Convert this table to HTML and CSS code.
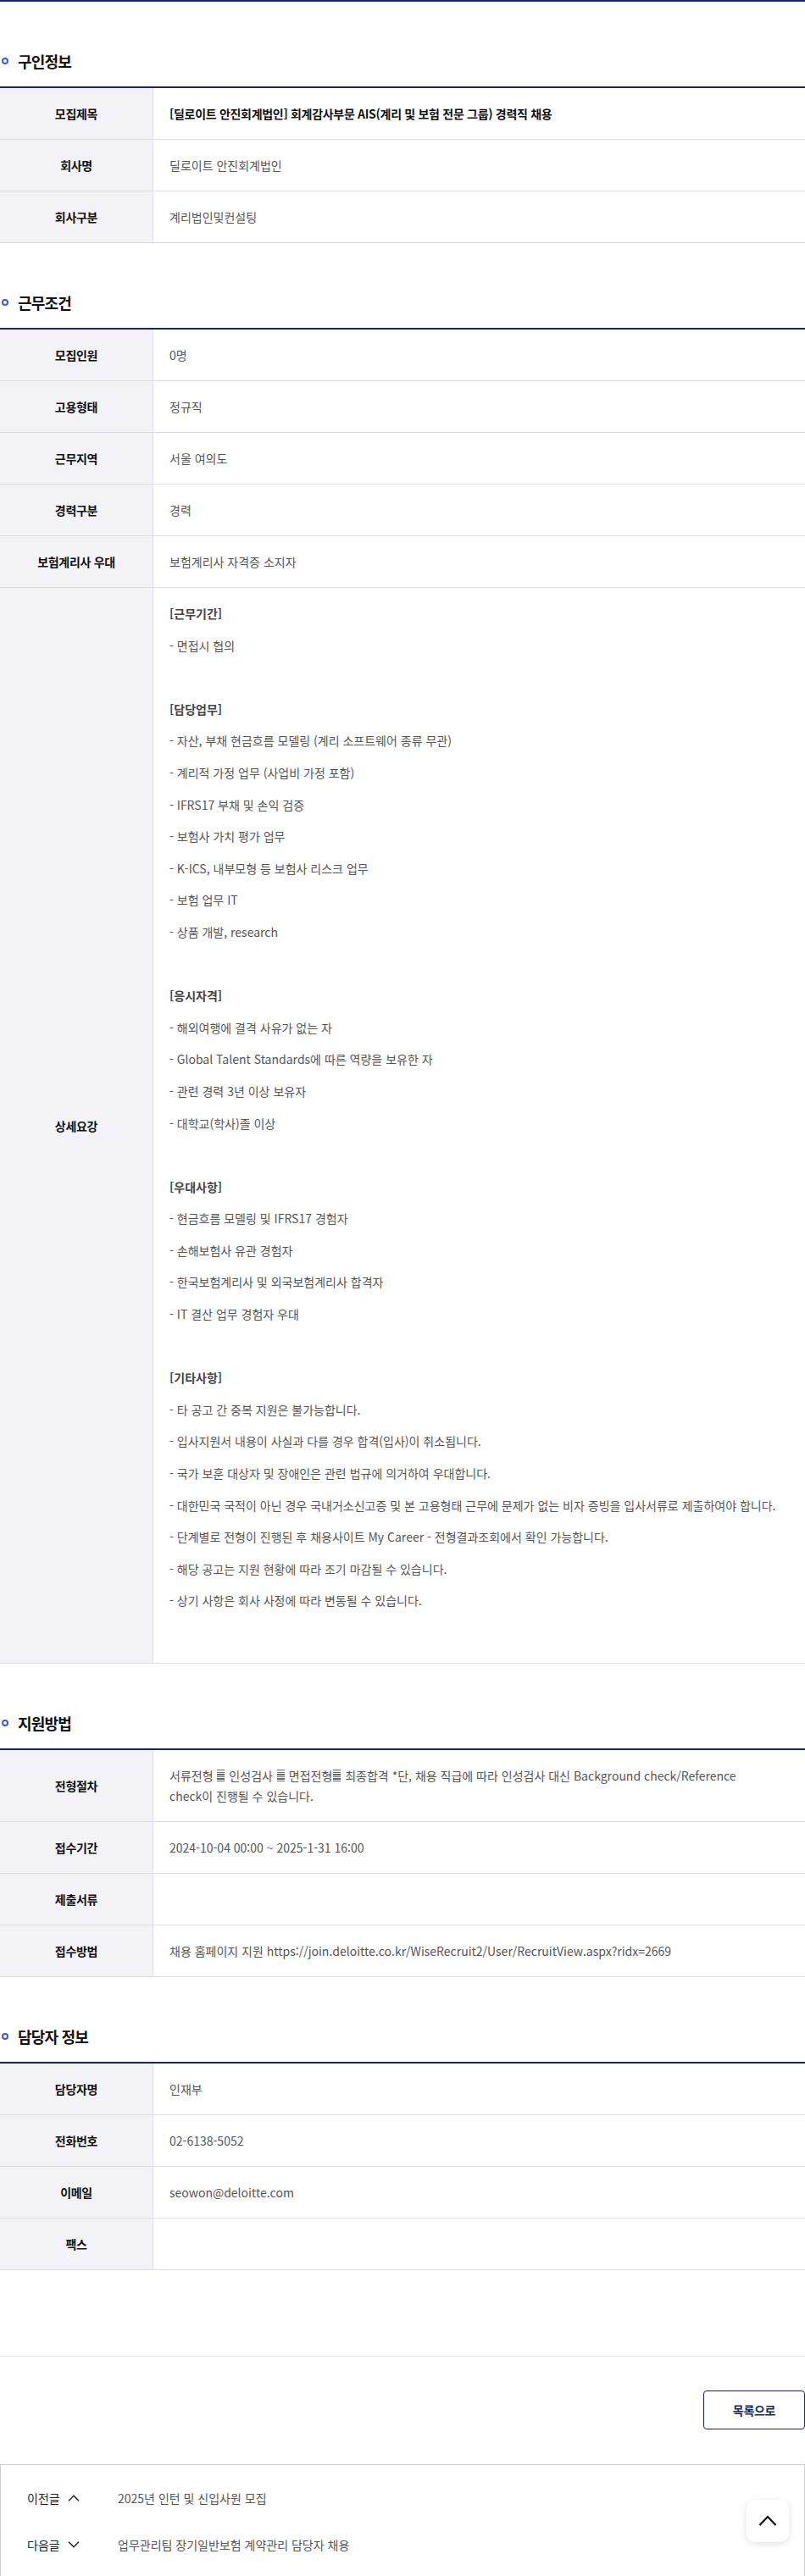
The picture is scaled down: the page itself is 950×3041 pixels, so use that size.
FILE: index.html
```html
<!DOCTYPE html>
<html lang="ko">
<head>
<meta charset="utf-8">
<title>채용 상세</title>
<link rel="stylesheet" href="styles.css">
</head>
<body>
<div class="page">
  <section class="section first">
    <h2 class="sec-title"><span class="dot"></span>구인정보</h2>
    <div class="table">
      <div class="row"><div class="th">모집제목</div><div class="td strong">[딜로이트 안진회계법인] 회계감사부문 AIS(계리 및 보험 전문 그룹) 경력직 채용</div></div>
      <div class="row"><div class="th">회사명</div><div class="td">딜로이트 안진회계법인</div></div>
      <div class="row"><div class="th">회사구분</div><div class="td">계리법인및컨설팅</div></div>
    </div>
  </section>

  <section class="section">
    <h2 class="sec-title"><span class="dot"></span>근무조건</h2>
    <div class="table">
      <div class="row"><div class="th">모집인원</div><div class="td">0명</div></div>
      <div class="row"><div class="th">고용형태</div><div class="td">정규직</div></div>
      <div class="row"><div class="th">근무지역</div><div class="td">서울 여의도</div></div>
      <div class="row"><div class="th">경력구분</div><div class="td">경력</div></div>
      <div class="row"><div class="th">보험계리사 우대</div><div class="td">보험계리사 자격증 소지자</div></div>
      <div class="row"><div class="th">상세요강</div>
        <div class="td detail">
          <p class="h">[근무기간]</p>
          <p>- 면접시 협의</p>
          <p>&nbsp;</p>
          <p class="h">[담당업무]</p>
          <p>- 자산, 부채 현금흐름 모델링 (계리 소프트웨어 종류 무관)</p>
          <p>- 계리적 가정 업무 (사업비 가정 포함)</p>
          <p>- IFRS17 부채 및 손익 검증</p>
          <p>- 보험사 가치 평가 업무</p>
          <p>- K-ICS, 내부모형 등 보험사 리스크 업무</p>
          <p>- 보험 업무 IT</p>
          <p>- 상품 개발, research</p>
          <p>&nbsp;</p>
          <p class="h">[응시자격]</p>
          <p>- 해외여행에 결격 사유가 없는 자</p>
          <p>- Global Talent Standards에 따른 역량을 보유한 자</p>
          <p>- 관련 경력 3년 이상 보유자</p>
          <p>- 대학교(학사)졸 이상</p>
          <p>&nbsp;</p>
          <p class="h">[우대사항]</p>
          <p>- 현금흐름 모델링 및 IFRS17 경험자</p>
          <p>- 손해보험사 유관 경험자</p>
          <p>- 한국보험계리사 및 외국보험계리사 합격자</p>
          <p>- IT 결산 업무 경험자 우대</p>
          <p>&nbsp;</p>
          <p class="h">[기타사항]</p>
          <p>- 타 공고 간 중복 지원은 불가능합니다.</p>
          <p>- 입사지원서 내용이 사실과 다를 경우 합격(입사)이 취소됩니다.</p>
          <p>- 국가 보훈 대상자 및 장애인은 관련 법규에 의거하여 우대합니다.</p>
          <p>- 대한민국 국적이 아닌 경우 국내거소신고증 및 본 고용형태 근무에 문제가 없는 비자 증빙을 입사서류로 제출하여야 합니다.</p>
          <p>- 단계별로 전형이 진행된 후 채용사이트 My Career - 전형결과조회에서 확인 가능합니다.</p>
          <p>- 해당 공고는 지원 현황에 따라 조기 마감될 수 있습니다.</p>
          <p>- 상기 사항은 회사 사정에 따라 변동될 수 있습니다.</p>
        </div>
      </div>
    </div>
  </section>

  <section class="section">
    <h2 class="sec-title"><span class="dot"></span>지원방법</h2>
    <div class="table">
      <div class="row"><div class="th">전형절차</div><div class="td wrap">서류전형 <span class="hx"></span> 인성검사 <span class="hx"></span> 면접전형<span class="hx"></span> 최종합격 *단, 채용 직급에 따라 인성검사 대신 Background check/Reference check이 진행될 수 있습니다.</div></div>
      <div class="row"><div class="th">접수기간</div><div class="td">2024-10-04 00:00 ~ 2025-1-31 16:00</div></div>
      <div class="row"><div class="th">제출서류</div><div class="td"></div></div>
      <div class="row"><div class="th">접수방법</div><div class="td">채용 홈페이지 지원 https://join.deloitte.co.kr/WiseRecruit2/User/RecruitView.aspx?ridx=2669</div></div>
    </div>
  </section>

  <section class="section">
    <h2 class="sec-title"><span class="dot"></span>담당자 정보</h2>
    <div class="table">
      <div class="row"><div class="th">담당자명</div><div class="td">인재부</div></div>
      <div class="row"><div class="th">전화번호</div><div class="td">02-6138-5052</div></div>
      <div class="row"><div class="th">이메일</div><div class="td">seowon@deloitte.com</div></div>
      <div class="row"><div class="th">팩스</div><div class="td"></div></div>
    </div>
  </section>

  <div class="divider"></div>

  <div class="btn-area">
    <a class="btn-list" href="#">목록으로</a>
  </div>

  <div class="post-nav">
    <div class="nav-row">
      <span class="nav-label">이전글 <svg class="chev" viewBox="0 0 14 8" width="14" height="8"><path d="M1 7.2 7 1.2l6 6" fill="none" stroke="#222" stroke-width="1.5"/></svg></span>
      <span class="nav-title">2025년 인턴 및 신입사원 모집</span>
    </div>
    <div class="nav-row">
      <span class="nav-label">다음글 <svg class="chev" viewBox="0 0 14 8" width="14" height="8"><path d="M1 0.8l6 6 6-6" fill="none" stroke="#222" stroke-width="1.5"/></svg></span>
      <span class="nav-title">업무관리팀 장기일반보험 계약관리 담당자 채용</span>
    </div>
  </div>
</div>

<a class="to-top" href="#"><svg viewBox="0 0 22 13" width="22" height="13"><path d="M1.5 12 11 2l9.5 10" fill="none" stroke="#111" stroke-width="2.2"/></svg></a>
</body>
</html>
```

FILE: styles.css
```css
* { box-sizing: border-box; }
html, body { margin: 0; padding: 0; background: #fff; }
body {
  font-family: "Noto Sans CJK KR", "Noto Sans", "DejaVu Sans", sans-serif;
  font-size: 14px;
  color: #555;
}
.page {
  width: 950px;
  border-top: 2px solid #17275c;
}
.section { padding-top: 58px; }
.sec-title {
  display: flex;
  align-items: center;
  margin: 0 0 18px 0;
  height: 24px;
  line-height: 24px;
  font-size: 18px;
  font-weight: 700;
  color: #111;
  letter-spacing: -0.8px;
}
.dot {
  width: 8px;
  height: 8px;
  border: 2px solid #3b5bd9;
  border-radius: 50%;
  margin: 0 11px 0 2px;
  flex: none;
}
.table { border-top: 2px solid #17275c; }
.row {
  display: flex;
  border-bottom: 1px solid #dedede;
}
.th {
  flex: none;
  width: 181px;
  background: #f3f3f7;
  border-right: 1px solid #e2e2e6;
  display: flex;
  align-items: center;
  justify-content: center;
  font-weight: 700;
  color: #111;
  line-height: 24px;
  letter-spacing: -0.3px;
}
.td {
  flex: 1;
  padding: 18px 20px 18px 19px;
  line-height: 24px;
  min-height: 60px;
  color: #555;
}
.td.wrap { padding-right: 62px; }
.td.strong { color: #111; font-weight: 700; letter-spacing: -0.3px; }
.hx {
  display: inline-block;
  width: 9px;
  height: 15px;
  margin: 0 1px;
  vertical-align: -2px;
  background: repeating-linear-gradient(to bottom, #666 0, #666 1.4px, transparent 1.4px, transparent 2.6px);
}
.detail { padding: 12px 20px 54px 19px; }
.detail p { margin: 0; line-height: 37.6px; }
.detail p.h { font-weight: 700; color: #444; }

.divider {
  margin-top: 101px;
  height: 1px;
  background: #dedede;
}
.btn-area {
  display: flex;
  justify-content: flex-end;
  padding-top: 40px;
}
.btn-list {
  display: flex;
  align-items: center;
  justify-content: center;
  width: 120px;
  height: 46px;
  border: 1px solid #17275c;
  border-radius: 4px;
  color: #17275c;
  font-weight: 700;
  font-size: 14px;
  text-decoration: none;
  letter-spacing: -0.3px;
}
.post-nav {
  margin-top: 41px;
  border: 1px solid #cfcfcf;
  padding: 27px 30px 26px 31px;
  display: flex;
  flex-direction: column;
  gap: 31px;
}
.nav-row {
  display: flex;
  align-items: center;
  line-height: 24px;
  height: 24px;
}
.nav-label {
  width: 107px;
  flex: none;
  display: flex;
  align-items: center;
  gap: 9px;
  color: #222;
}
.nav-title { color: #555; }
.chev { display: block; }
.to-top {
  position: fixed;
  right: 19px;
  bottom: 40px;
  width: 50px;
  height: 50px;
  border-radius: 10px;
  background: #fff;
  box-shadow: 0 2px 8px rgba(0,0,0,0.12);
  display: flex;
  align-items: center;
  justify-content: center;
}
.to-top svg { display: block; margin-top: -2px; }
```
